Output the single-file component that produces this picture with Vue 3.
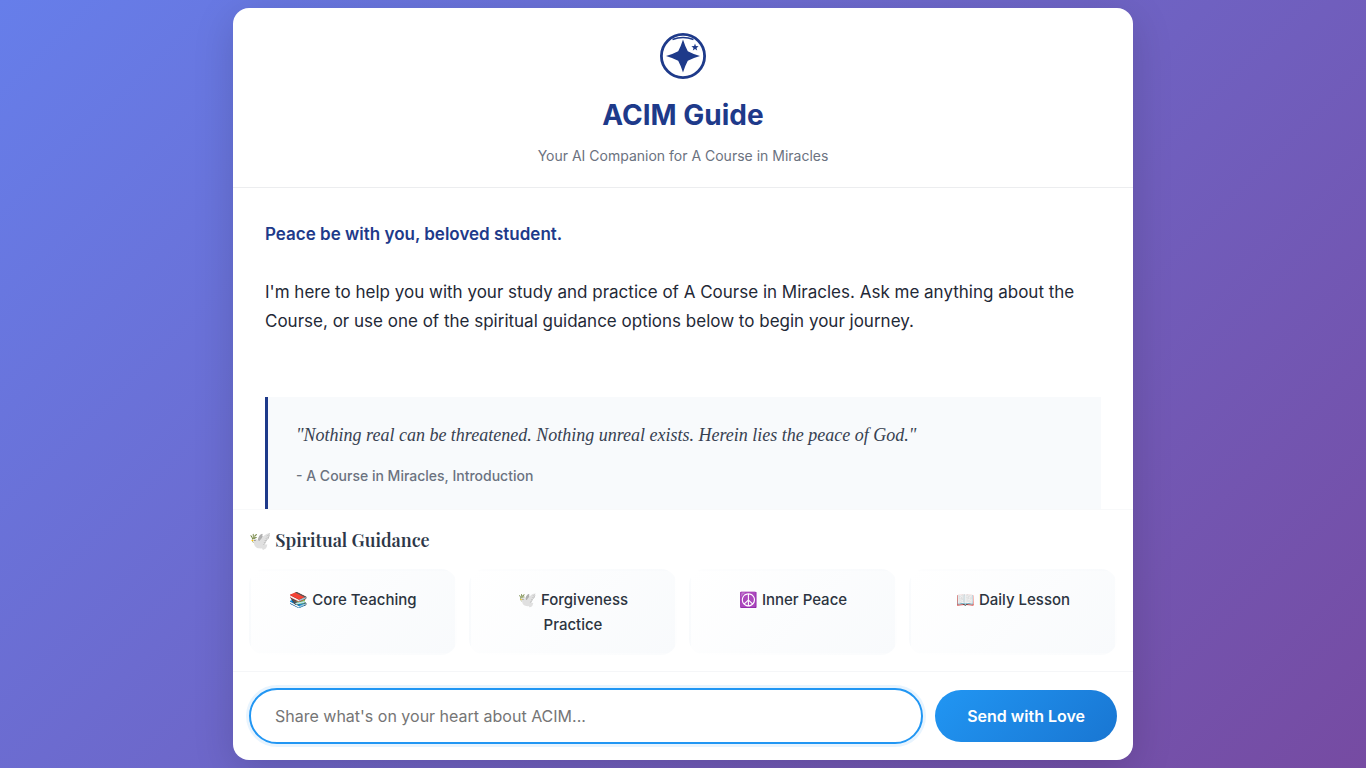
<script setup>
import { onMounted, ref } from 'vue'

const message = ref('')
const field = ref(null)
const topics = [
  '📚 Core Teaching',
  '🕊️ Forgiveness Practice',
  '☮️ Inner Peace',
  '📖 Daily Lesson'
]

onMounted(() => field.value.focus())
</script>

<template>
  <div class="page">
    <main class="card">
      <header class="header">
        <svg class="logo" viewBox="0 0 48 48" aria-hidden="true">
          <circle cx="24" cy="24" r="21.6" fill="none" stroke="#1e3a8a" stroke-width="2.8" />
          <path d="M24 7.5 Q26 14 28.8 19.2 Q34 22 41 24 Q34 26 28.8 28.8 Q26 34 24 40.5 Q22 34 19.2 28.8 Q14 26 7 24 Q14 22 19.2 19.2 Q22 14 24 7.5Z" fill="#1e3a8a" />
          <path d="M36 11.6 L36.9 14.1 L39.6 14.2 L37.5 15.9 L38.2 18.4 L36 16.9 L33.8 18.4 L34.5 15.9 L32.4 14.2 L35.1 14.1Z" fill="#1e3a8a" />
          <path d="M13.5 7.5 Q24 3.5 34.5 7.5" fill="none" stroke="#1e3a8a" stroke-width="1.6" />
        </svg>
        <h1>ACIM Guide</h1>
        <p>Your AI Companion for A Course in Miracles</p>
      </header>

      <section class="messages">
        <p class="greeting">Peace be with you, beloved student.</p>
        <p class="intro">
          I'm here to help you with your study and practice of A Course in Miracles. Ask me anything about the
          Course, or use one of the spiritual guidance options below to begin your journey.
        </p>
        <blockquote>
          <p>"Nothing real can be threatened. Nothing unreal exists. Herein lies the peace of God."</p>
          <cite>- A Course in Miracles, Introduction</cite>
        </blockquote>
      </section>

      <section class="guidance">
        <h2>🕊️ Spiritual Guidance</h2>
        <div class="topics">
          <button v-for="topic in topics" :key="topic" type="button">{{ topic }}</button>
        </div>
      </section>

      <form class="composer" @submit.prevent>
        <input
          ref="field"
          v-model="message"
          type="text"
          aria-label="Your message"
          placeholder="Share what's on your heart about ACIM..."
        />
        <button type="submit">Send with Love</button>
      </form>
    </main>
  </div>
</template>

<style>
body {
  margin: 0;
}
</style>

<style scoped>
* {
  box-sizing: border-box;
}

.page {
  height: 100vh;
  padding: 8px;
  display: flex;
  justify-content: center;
  background: linear-gradient(135deg, #667eea 0%, #764ba2 100%);
  font-family: Inter, "Liberation Sans", sans-serif;
  overflow: hidden;
}

.card {
  width: 100%;
  max-width: 900px;
  display: flex;
  flex-direction: column;
  background: #fff;
  border-radius: 16px;
  box-shadow: 0 10px 40px rgba(0, 0, 0, 0.15);
  overflow: hidden;
}

.header {
  flex: none;
  padding: 24px 24px 20px;
  border-bottom: 1px solid #ecedef;
  text-align: center;
}

.logo {
  display: block;
  width: 48px;
  height: 48px;
  margin: 0 auto 16px;
}

h1 {
  margin: 0 0 10px;
  color: #1e3a8a;
  font-size: 28px;
  font-weight: 700;
  line-height: 38px;
}

.header p {
  margin: 0;
  color: #6b7280;
  font-size: 14px;
  line-height: 23px;
}

.messages {
  flex: 1;
  min-height: 0;
  padding: 32px;
  color: #1f2937;
  font-size: 17px;
  line-height: 29px;
  overflow: hidden;
}

.greeting {
  margin: 0 0 29px;
  color: #1e3a8a;
  font-weight: 600;
}

.intro {
  margin: 0;
}

blockquote {
  margin: 61px 0 0;
  padding: 24px 28px;
  border-left: 3px solid #1e3a8a;
  background: #f8fafc;
}

blockquote p {
  margin: 0 0 11px;
  color: #374151;
  font-family: "Liberation Serif", serif;
  font-size: 18px;
  font-style: italic;
}

cite {
  display: block;
  color: #6b7280;
  font-size: 14px;
  font-style: normal;
  font-weight: 500;
}

.guidance {
  flex: none;
  padding: 16px;
  border-top: 1px solid #f8f9fa;
}

h2 {
  margin: 0 0 14px;
  color: #2d3748;
  font-family: "Playfair Display", "Liberation Serif", serif;
  font-size: 18px;
  font-weight: 600;
  line-height: 29px;
}

.topics {
  display: grid;
  grid-template-columns: repeat(4, 1fr);
  gap: 12px;
}

.topics button {
  display: flex;
  align-items: flex-start;
  justify-content: center;
  padding: 16px;
  border: 2px solid transparent;
  border-radius: 16px;
  background: linear-gradient(135deg, #fff 0%, #f8fafc 100%);
  color: #2c3440;
  font-family: inherit;
  font-size: 15px;
  font-weight: 500;
  line-height: 25px;
  text-align: center;
}

.composer {
  flex: none;
  display: flex;
  align-items: center;
  gap: 12px;
  padding: 16px;
  border-top: 1px solid #f5f6f8;
}

.composer input {
  flex: 1;
  min-width: 0;
  height: 56px;
  padding: 0 24px;
  border: 2px solid #2196f3;
  border-radius: 28px;
  outline: none;
  background: #fff;
  box-shadow: 0 0 0 3px rgba(33, 150, 243, 0.1);
  color: #2c3e50;
  caret-color: transparent;
  font-family: inherit;
  font-size: 16px;
}

.composer input::placeholder {
  color: #757575;
}

.composer button {
  height: 52px;
  padding: 0 32px;
  border: 0;
  border-radius: 26px;
  background: linear-gradient(135deg, #2196f3 0%, #1976d2 100%);
  color: #fff;
  font-family: inherit;
  font-size: 16px;
  font-weight: 600;
}
</style>
